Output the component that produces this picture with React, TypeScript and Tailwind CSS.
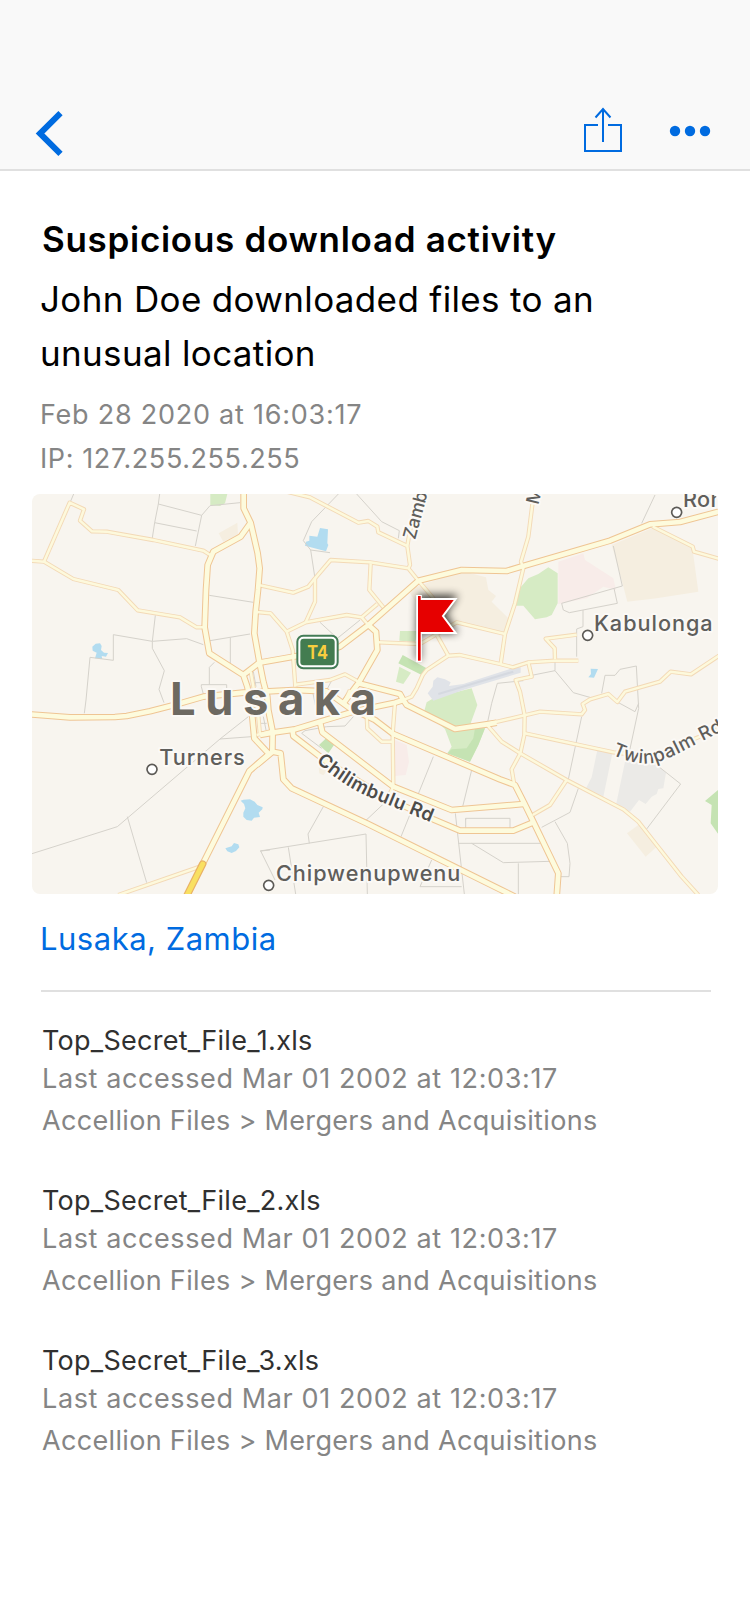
const files = ["Top_Secret_File_1.xls", "Top_Secret_File_2.xls", "Top_Secret_File_3.xls"];

const lanes = [
  "M131 12L120 38",
  "M389 12L385 42L374 98L366 150M385 42L515 76L496 168M374 98L500 123M515 76L540 47L630 38",
  "M538 316L670 337M376 376L367 454L250 434V511L180 502L168 630L163 670M367 454L470 446L520 464M367 454V475L403 542L387 598L402 638M540 452L660 432M601 443V520M553 517L538 532V584M514 590V584H590V600M514 590L520 612",
  "M925 12L845 95L820 152L842 180L900 188M842 180L855 265M980 12L1055 95L1108 122L1105 145M870 397L922 445L990 390M905 572L890 600M848 605L856 645",
  "M1875 15L1835 100M1750 168L1777 288L1595 340L1600 360L1618 368L1762 340L1752 295M1659 360V410L1640 417V500M1575 515V542L1505 556M1575 542L1630 608L1690 625M1480 572L1402 580L1385 640L1372 700M1715 610L1725 556H1755L1770 538L1819 528L1826 655L1795 800M1826 640L1815 665L1762 636",
  "M6 1091L262 1010L570 747L655 680M570 747L665 740M292 980L350 1178M720 1080L692 1083L735 1170M690 1083L1008 1032L1012 1212M775 1072L797 1212M838 1060L834 1032L880 950M1210 800L1113 1040M1325 840L1298 950M1007 992L1075 928M1276 970L1303 1212M1307 990V985V1013M1307 985H1440V1020M1285 1060H1530M1325 1060L1420 1118L1560 1114M1465 1120V1212M1205 1110L1170 1190H1295",
  "M815 730L825 722L890 710L945 708L970 680M815 730L875 775M700 680L708 720M690 700H710M670 545L678 590M672 578H690M1655 680L1615 868M1645 895L1620 967L1535 1012M1575 995L1612 1060L1620 1120L1617 1160H1590M1880 825L1952 882L1850 1017",
];

const minorRoads = [
  "M0 212L42 215L130 267L265 300L323 361L450 382L500 412H525",
  "M42 215L119 38L162 58L150 92L186 124L230 125L370 150L520 182L545 198",
  "M690 286L790 308L835 290L855 265L902 210L1020 217L1135 235L1165 272",
  "M855 265V335L827 397M680 366L722 370L770 425L788 480L796 590",
  "M770 425L827 397L950 375L995 382L1015 405M995 382L1042 342M1022 220L1018 300L1060 352",
  "M770 5L840 22L985 98L1015 93L1042 110L1045 127L1132 168L1140 225L1135 235M1132 168L1140 120L1190 -10",
  "M1045 457L1170 462L1280 397L1425 432M1165 272L1210 325L1218 430L1255 497",
  "M796 584L900 570L945 553L985 575",
  "M1120 630L1145 620L1160 595L1178 555L1190 540L1255 497L1290 495L1410 522L1448 532L1495 517L1575 512H1645",
  "M1575 508L1574 475L1547 446L1640 434",
  "M1495 517L1505 560L1457 570L1470 605L1484 676L1483 735L1471 790L1445 838L1453 885",
  "M1510 20L1495 140L1473 215L1480 235L1455 340L1425 432L1412 522",
  "M1868 110L1988 170L1992 185L2070 207",
  "M1380 700L1484 676L1530 665L1655 673L1665 660L1658 642L1680 628L1735 612L1762 636L1785 605L1890 575L1922 545L1983 553L2070 495",
  "M1484 730L1750 787L1800 793M1990 748L2070 715",
  "M1370 703L1415 755L1471 790L1610 870L1780 958L1825 995L1880 1065L1955 1160L2005 1215",
  "M1610 870L1560 945L1508 975",
  "M1010 675L1012 715L1055 755H1090M1095 638L1088 730L1090 890L1080 910",
  "M510 1130L265 1215",
  "M662 545L672 600L685 680L690 735M680 735L728 722M940 640L960 600",
];

const majorRoads = [
  "M641 0V55L662 98L632 140L550 185L533 225L528 300L524 412L538 490L640 555L652 590L665 660L673 745L717 792L658 843L518 1122",
  "M662 98L683 190L689 235L684 300L677 365L673 430L688 515L700 575L712 620L715 660L728 725L727 785",
  "M640 555L688 518L790 500L890 485L930 470L1015 405L1165 272L1295 240L1430 243L1480 228L1740 152L1860 103L1950 96L2070 64",
  "M0 673L120 682L255 681L290 678L360 664L430 646L520 620L640 608L790 600L890 604L960 655L1035 690L1090 732L1410 868L1455 885L1483 940L1510 995L1585 1150L1580 1220",
  "M1015 405L1038 425L1042 480L985 580L940 640M985 580L1110 612L1120 630L1130 645L1275 717L1370 703L1400 698",
  "M690 735L728 728L795 718L870 695L980 662L1095 638L1120 630",
  "M870 697L877 727L1070 875L1090 890L1265 960L1480 942",
  "M787 718L790 738L890 815L1060 920L1210 988L1290 1022H1450L1510 997",
  "M680 825L728 785L752 790L760 868L785 895L1010 1000L1410 1198L1455 1220",
];

const greens = [
  "M541 0L592 12L585 40L570 48L541 46Z",
  "M1555 232L1583 250V340L1565 375L1550 382L1515 388L1480 347H1458L1465 300L1495 265L1525 252Z",
  "M1110 423H1170L1155 455L1108 452Z",
  "M1108 530L1143 548L1120 582L1098 575Z",
  "M1215 622L1325 595L1342 645L1322 700L1365 715L1345 765L1320 815L1252 790L1265 770L1245 717L1183 662L1190 637Z",
];

const darkGreens = [
  "M1118 495L1190 535L1175 555L1105 520Z",
  "M890 743L912 765L895 790L867 765Z",
  "M2070 895L2025 933L2045 945L2042 1000L2070 1040Z",
  "M1365 715L1345 765L1320 815L1252 790L1265 778L1310 775L1330 745L1335 715Z",
];

const waters = [
  "M187 470L197 461L210 460L215 468L213 480L222 488L234 489L228 500L215 498L217 507L195 505L200 488L188 482Z",
  "M838 137L862 140L870 114L894 118L892 160L895 165L888 184L825 167L828 155L838 152Z",
  "M1682 536L1704 537L1692 563L1675 562L1683 552Z",
  "M632 932L640 929L660 928L674 935L682 945L698 952L697 958L686 968L690 981L672 983L665 992L650 990L640 980L640 968L646 955L642 942Z",
  "M586 1075L605 1069L612 1059L625 1063L628 1072L618 1083L605 1089L592 1084Z",
];

const tans = [
  "M1160 290L1295 243L1368 262L1375 300L1398 318L1385 335L1435 385L1422 430L1280 395L1215 425L1140 310Z",
  "M1745 165L1865 115L1985 175L1990 195L2005 305L1880 325L1792 335L1775 270Z",
  "M566 130L622 98L624 135L580 155Z",
  "M1828 1003L1880 1070L1847 1100L1791 1030Z",
  "M866 832H900L880 856L868 850Z",
];

function CityMap() {
  return (
    <svg viewBox="6 12 2058 1200" className="block h-[400px] w-[686px] rounded-lg bg-[#f8f5ef] font-[Inter,sans-serif]">
      <defs>
        <path id="twinpalm" d="M1745 793Q1835 835 1895 812C1945 794 1990 765 2100 712" />
        <path id="chilimbulu" d="M858 815Q935 884 1015 920L1260 1020" />
        <filter id="soft" x="-50%" y="-50%" width="200%" height="200%">
          <feGaussianBlur stdDeviation="12" />
        </filter>
      </defs>
      <g>
        {tans.map((d) => <path key={d} d={d} fill="#f5eee0" />)}
        <path d="M1585 215L1660 190L1665 210L1750 265L1758 300L1720 290L1670 325L1585 342Z" fill="#f8ece9" />
        <path d="M1095 750L1130 765L1137 815L1127 855L1095 858Z" fill="#f8ece9" />
        <path d="M1702 780L1747 790L1720 920L1668 895L1685 862Z" fill="#ebeae7" />
        <path d="M1785 815L1840 818L1880 822L1908 848L1900 895L1885 897L1880 912L1865 920L1847 942L1827 930L1800 965L1758 945Z" fill="#ebeae7" />
        {greens.map((d) => <path key={d} d={d} fill="#d6ebc4" />)}
        {darkGreens.map((d) => <path key={d} d={d} fill="#c5e3b3" />)}
        <path d="M1193 610L1208 590L1210 572L1222 562L1245 568L1262 577L1257 588L1300 582L1455 532L1472 532V548L1300 600L1210 632Z" fill="#e0e3e8" />
        <path d="M1225 612L1450 545" stroke="#d5d9e0" strokeWidth="6" />
        {waters.map((d) => <path key={d} d={d} fill="#b2dcf0" />)}
      </g>
      <g fill="none" strokeLinejoin="round">
        {lanes.map((d) => <path key={d} d={d} stroke="#d5d2cb" strokeWidth="3" />)}
        {minorRoads.map((d) => <path key={d} d={d} stroke="#f3d9b6" strokeWidth="13" />)}
        {majorRoads.map((d) => <path key={d} d={d} stroke="#efc594" strokeWidth="20" />)}
        {minorRoads.map((d) => <path key={d} d={d} stroke="#fdf9dc" strokeWidth="7.500" />)}
        {majorRoads.map((d) => <path key={d} d={d} stroke="#fdfbdd" strokeWidth="14" />)}
        <path d="M518 1122L468 1222" stroke="#e9b266" strokeWidth="22" strokeLinecap="round" />
        <path d="M518 1122L468 1222" stroke="#f9e062" strokeWidth="15" strokeLinecap="round" />
      </g>
      <g fill="#fff" stroke="#5c5a56" strokeWidth="5">
        <circle cx="366" cy="838" r="15" />
        <circle cx="1673" cy="436" r="15" />
        <circle cx="1940" cy="67" r="15" />
        <circle cx="716" cy="1186" r="15" />
      </g>
      <g stroke="#fbf9f6" strokeWidth="12" strokeLinejoin="round" paintOrder="stroke" fill="#5f5e5b">
        <text x="420" y="674" fontSize="136" fontWeight="700" fill="#6d6961" textLength="618">Lusaka</text>
        <g fontSize="65" fontWeight="500">
          <text x="388" y="825" textLength="256">Turners</text>
          <text x="1692" y="422" textLength="356">Kabulonga</text>
          <text x="738" y="1172" textLength="553">Chipwenupwenu</text>
          <text x="1959" y="52" letterSpacing="1">Rom</text>
        </g>
        <g fontSize="56" fontWeight="500">
          <text transform="translate(1155 151) rotate(-75)" fontSize="54">Zamb</text>
          <text transform="translate(1525 46) rotate(-76)" fontSize="54">M</text>
          <text letterSpacing="2"><textPath href="#twinpalm">Twinpalm Rd</textPath></text>
          <text fill="#4d4c4a" fontWeight="600" letterSpacing="1.500"><textPath href="#chilimbulu">Chilimbulu Rd</textPath></text>
        </g>
      </g>
      <rect x="802" y="437" width="121" height="98" rx="18" fill="#fff" stroke="#437c56" strokeWidth="6" />
      <rect x="811" y="446" width="103" height="80" rx="10" fill="#437c50" />
      <text x="832" y="506" fontSize="57" fontWeight="700" fill="#f8ce3f" textLength="62" lengthAdjust="spacingAndGlyphs">T4</text>
      <path d="M1163 315H1284L1248 372L1284 430H1172V510H1158Z" fill="#000" opacity=".75" filter="url(#soft)" />
      <path d="M1167 327H1277L1239 378L1277 429H1167Z" fill="#e60000" stroke="#fff" strokeWidth="6" />
      <path d="M1167 315V516" stroke="#fff" strokeWidth="17" />
      <path d="M1168 318V512" stroke="#e60000" strokeWidth="8" />
      <path d="M1168 330H1185V426H1168Z" fill="#e60000" />
    </svg>
  );
}

export default function App() {
  return (
    <div className="min-h-[1624px] w-[750px] bg-white font-[Inter,sans-serif] text-black">
      <header className="flex h-[171px] items-end justify-between border-b-2 border-[#e0e0e0] bg-[#f9f9f9] pr-[39px] pl-[34px] text-[#006be0]">
        <button aria-label="Back" className="mb-[13px]">
          <svg className="block h-[46px] w-[30px]" viewBox="0 0 30 46" fill="none" stroke="currentColor" strokeWidth="6">
            <path d="M26.5 3.2L6 23.5L26.5 43.8" />
          </svg>
        </button>
        <div className="flex items-end gap-[46px]">
          <button aria-label="Share" className="mb-4">
            <svg className="block h-[46px] w-[40px]" viewBox="0 0 40 46" fill="none" stroke="currentColor" strokeWidth="2">
              <path d="M15 18H2V44H38V18H25M20 35V3M12.500 10.500L20 2L27.500 10.500" />
            </svg>
          </button>
          <button aria-label="More" className="mb-8">
            <svg className="block h-[12px] w-[42px]" viewBox="0 0 42 12" fill="currentColor">
              <circle cx="6" cy="6" r="5.200" />
              <circle cx="21" cy="6" r="5.200" />
              <circle cx="36" cy="6" r="5.200" />
            </svg>
          </button>
        </div>
      </header>
      <main className="px-8 pt-[41px]">
        <section className="pl-2">
          <h1 className="pl-0.5 text-[35px] leading-[54px] font-semibold tracking-[0.700px]">Suspicious download activity</h1>
          <p className="mt-1.5 text-[35px] leading-[54px] tracking-[0.350px]">
            John Doe downloaded files to an
            <br />
            unusual location
          </p>
          <div className="mt-[13px] text-[27px] leading-[44px] text-[#858585]">
            <p className="tracking-[0.750px]">Feb 28 2020 at 16:03:17</p>
            <p className="tracking-[0.600px]">IP: 127.255.255.255</p>
          </div>
        </section>
        <div className="mt-[13px]">
          <CityMap />
        </div>
        <a className="mt-[23px] block pl-2 text-[31px] leading-[44px] tracking-[0.500px] text-[#006be0]">Lusaka, Zambia</a>
        <hr className="mt-[29px] mr-[7px] ml-[9px] border-t-2 border-[#e0e0e0]" />
        <ul className="mt-[31px] flex flex-col gap-[41px] pl-2.5 text-[27px] text-[#858585]">
          {files.map((name) => (
            <li key={name}>
              <p className="leading-[35px] tracking-[0.270px] text-[#303030]">{name}</p>
              <p className="leading-[42px] tracking-[0.610px]">Last accessed Mar 01 2002 at 12:03:17</p>
              <p className="leading-[42px] tracking-[0.330px]">Accellion Files &gt; Mergers and Acquisitions</p>
            </li>
          ))}
        </ul>
      </main>
    </div>
  );
}
